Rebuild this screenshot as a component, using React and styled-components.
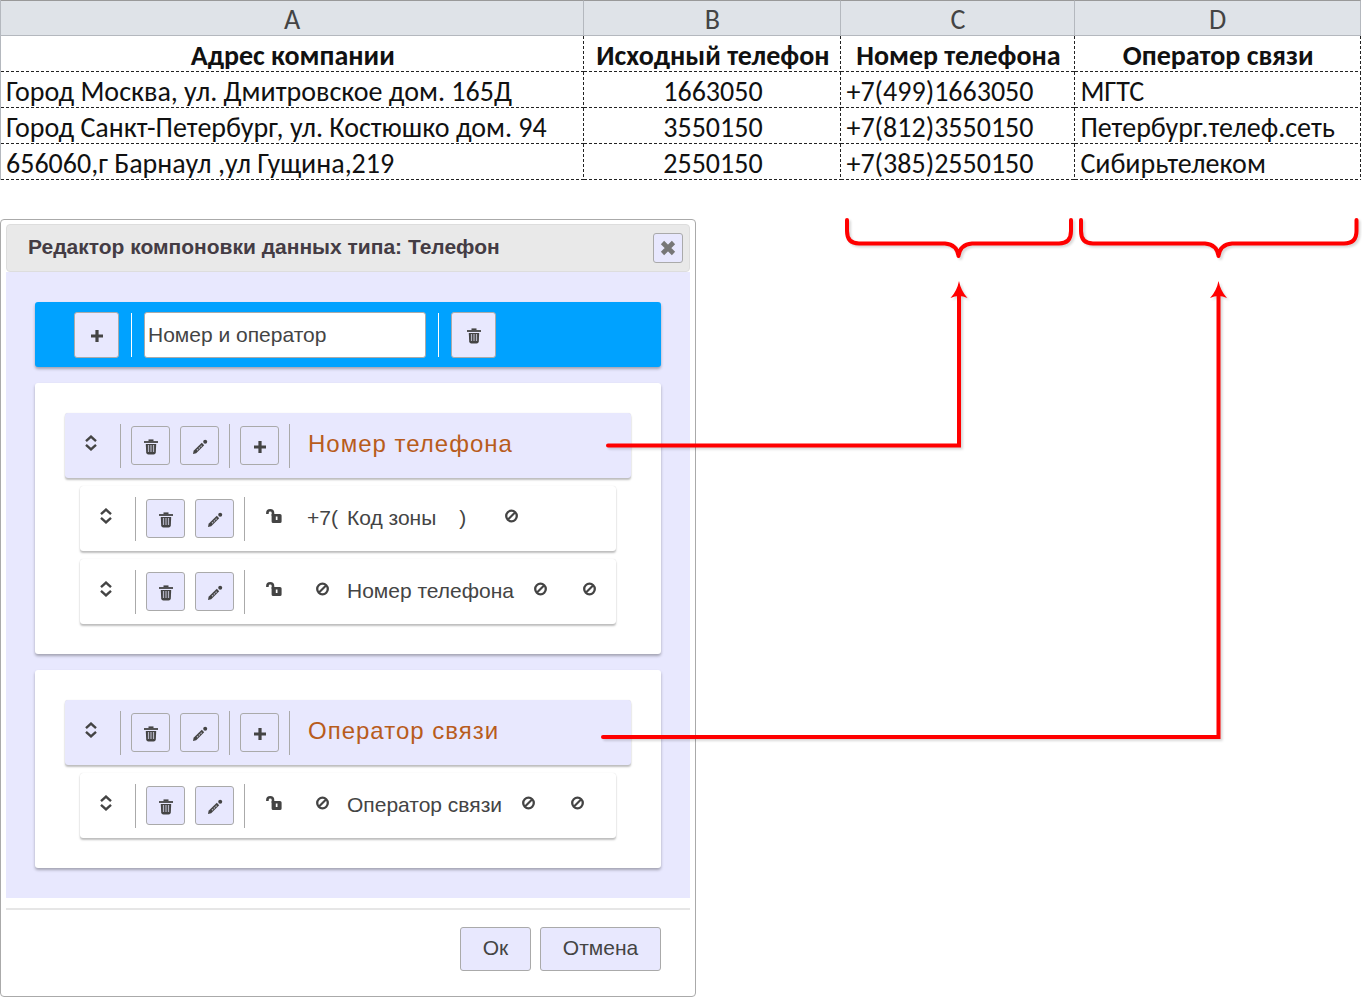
import React, { useState } from 'react';
import styled, { createGlobalStyle } from 'styled-components';

const GlobalStyle = createGlobalStyle`
  * {
    box-sizing: border-box;
  }

  body {
    margin: 0;
    background: #fff;
    color: #444;
    font-family: Arial, "Liberation Sans", sans-serif;
    font-size: 21px;
  }
`;

const Page = styled.main`
  position: relative;
`;

const SheetWrap = styled.div`
  padding-right: 1px;
`;

const Sheet = styled.table`
  width: 100%;
  table-layout: fixed;
  border-collapse: separate;
  border-spacing: 0;
  border-left: 1px solid #b4b8be;
  font-family: Calibri, Carlito, Lato, sans-serif;
  font-size: 28px;
  line-height: 32px;
  color: #111;
`;

const Col = styled.col`
  width: ${(props) => props.$width};
`;

const ColumnLetter = styled.th`
  height: 36px;
  padding: 4px 0 0;
  border-top: 1px solid #999;
  border-right: 1px solid #b4b8be;
  border-bottom: 1px solid #b4b8be;
  background: #dfe3e8;
  color: #444;
  font-weight: 400;
  line-height: 30px;
`;

const Cell = styled.td`
  height: 36px;
  padding: 4px 5px 0;
  text-align: ${(props) => props.$align || 'left'};
  font-weight: ${(props) => (props.$bold ? 700 : 400)};
  white-space: nowrap;
  background-image: repeating-linear-gradient(to right, #222 0 3px, transparent 3px 5px),
    repeating-linear-gradient(to bottom, #222 0 3px, transparent 3px 5px);
  background-size: 100% 1px, 1px 100%;
  background-position: left bottom, right top;
  background-repeat: no-repeat;
`;

const Dialog = styled.section`
  width: 100%;
  max-width: 696px;
  margin-top: 39px;
  padding: 4px 5px;
  border: 1px solid #aaa;
  border-radius: 4px;
`;

const DialogHeader = styled.header`
  display: flex;
  align-items: center;
  justify-content: space-between;
  height: 48px;
  padding: 0 6px 0 21px;
  border: 1px solid #ddd;
  border-radius: 4px;
  background: #e9e9e9;
`;

const DialogTitle = styled.h1`
  margin: 0;
  padding-bottom: 2px;
  font-size: 21px;
  line-height: 24px;
  color: #443c44;
`;

const Button = styled.button`
  display: inline-flex;
  flex: none;
  align-items: center;
  justify-content: center;
  width: ${(props) => props.$width || '39px'};
  height: ${(props) => props.$height || '39px'};
  padding: 2px 0 0;
  border: 1px solid #aaa;
  border-radius: 3px;
  background: #e8e8fe;
  color: #444;
  font: inherit;
  cursor: pointer;
`;

const CloseButton = styled(Button)`
  padding: 0;
  color: #777;
`;

const DialogBody = styled.div`
  display: flex;
  flex-direction: column;
  gap: 16px;
  padding: 30px 29px;
  background: #e8e8fe;
`;

const LayoutBar = styled.div`
  display: flex;
  align-items: center;
  gap: 12px;
  height: 65px;
  padding-left: 39px;
  border-radius: 3px;
  background: #00a2ff;
  box-shadow: 0 2px 3px rgba(0, 0, 0, 0.3);
`;

const Separator = styled.span`
  flex: none;
  width: 1px;
  height: 44px;
  background: ${(props) => props.$color || '#aaa'};
`;

const NameInput = styled.input`
  width: 282px;
  height: 46px;
  padding: 0 4px 0 3px;
  border: 1px solid #aaa;
  border-radius: 3px;
  background: #fff;
  color: #444;
  font: inherit;
`;

const Group = styled.section`
  display: flex;
  flex-direction: column;
  gap: 8px;
  padding: 30px;
  border-radius: 3px;
  background: #fff;
  box-shadow: 0 2px 3px rgba(0, 0, 0, 0.3);
`;

const Row = styled.div`
  display: flex;
  align-items: center;
  height: 65px;
  margin: ${(props) => (props.$head ? '0' : '0 15px')};
  border-radius: 3px;
  background: ${(props) => (props.$head ? '#e8e8fe' : '#fff')};
  box-shadow: 0 2px 2px rgba(0, 0, 0, 0.25), 0 0 1px rgba(0, 0, 0, 0.15);
`;

const Handle = styled.span`
  display: flex;
  justify-content: center;
  width: 52px;
  margin-right: 3px;
  padding-bottom: 6px;
  cursor: move;
`;

const Tools = styled.div`
  display: flex;
  gap: 10px;
  padding: 0 10px;
`;

const GroupTitle = styled.h2`
  margin: 0 0 0 18px;
  padding-bottom: 4px;
  color: #b85c1c;
  font-size: 24px;
  font-weight: 400;
  letter-spacing: 1px;
`;

const Slots = styled.div`
  display: flex;
  align-items: center;
  margin-left: 4px;
  padding-bottom: 2px;
`;

const Slot = styled.span`
  display: flex;
  justify-content: center;
  width: 49px;
  padding-bottom: ${(props) => (props.$icon ? '4px' : '0')};
`;

const FieldName = styled.span`
  padding-right: 2px;
  white-space: nowrap;
`;

const DialogFooter = styled.footer`
  display: flex;
  justify-content: flex-end;
  gap: 9px;
  margin-top: 10px;
  padding: 17px 29px 21px;
  border-top: 2px solid #e6e6e6;
`;

const FooterButton = styled(Button)`
  height: 44px;
  padding: 0 0 2px;
`;

const Markup = styled.svg`
  position: absolute;
  top: 0;
  left: 0;
  pointer-events: none;
  filter: drop-shadow(2px 2px 1px rgba(0, 0, 0, 0.15));
`;

const Icon = ({ children }) => (
  <svg width="16" height="16" viewBox="0 0 16 16" fill="none" stroke="currentColor" aria-hidden="true">
    {children}
  </svg>
);

const PlusIcon = () => (
  <Icon>
    <path d="M8 2v12M2 8h12" strokeWidth="3.2" />
  </Icon>
);

const TrashIcon = () => (
  <Icon>
    <path d="M1 3h14" strokeWidth="1.8" />
    <path d="M5.5 1.300h5" strokeWidth="1.800" />
    <path d="M2.800 5h10.400l-.4 8.600q-.2 2-2.200 2H5.400q-2 0-2.200-2z" fill="currentColor" stroke="none" />
    <path d="M5.500 6v7M8 6v7M10.500 6v7" stroke="#b4b4c4" strokeWidth="1.200" />
  </Icon>
);

const PencilIcon = () => (
  <Icon>
    <path d="M1 15l.6-3.200 8.200-8 2.400 2.400-8 8z" fill="currentColor" stroke="none" />
    <path d="M5 11.200l5.400-5.200" stroke="#b4b4c4" strokeWidth="1.200" strokeDasharray="1.500 1" />
    <circle cx="13.200" cy="2.800" r="2" fill="currentColor" stroke="none" />
  </Icon>
);

const SortIcon = () => (
  <Icon>
    <path d="M3 6.200l5-4.600 5 4.600M3 9.800l5 4.600 5-4.600" strokeWidth="2.400" />
  </Icon>
);

const UnlockIcon = () => (
  <Icon>
    <path d="M1.400 6V5Q1.400 2.300 4.200 2.300Q7 2.300 7 5v3" strokeWidth="2.600" />
    <path
      d="M5.600 6H14q1.600 0 1.600 1.600V13.400q0 1.600-1.600 1.600H7.200q-1.600 0-1.600-1.600z M9.800 8.500v3.500h1.700V8.500z"
      fill="currentColor"
      fillRule="evenodd"
      stroke="none"
    />
  </Icon>
);

const BanIcon = () => (
  <Icon>
    <circle cx="7.500" cy="8" r="5.300" strokeWidth="2.300" />
    <path d="M4 11.500l7-7" strokeWidth="2.200" />
  </Icon>
);

const CloseIcon = () => (
  <Icon>
    <path d="M2.500 2.500l11 11M13.500 2.500l-11 11" strokeWidth="4.600" />
  </Icon>
);

const letters = ['A', 'B', 'C', 'D'];
const headings = ['Адрес компании', 'Исходный телефон', 'Номер телефона', 'Оператор связи'];
const rows = [
  ['Город Москва, ул. Дмитровское дом. 165Д', '1663050', '+7(499)1663050', 'МГТС'],
  ['Город Санкт-Петербург, ул. Костюшко дом. 94', '3550150', '+7(812)3550150', 'Петербург.телеф.сеть'],
  ['656060,г Барнаул ,ул Гущина,219', '2550150', '+7(385)2550150', 'Сибирьтелеком'],
];

const groups = [
  {
    title: 'Номер телефона',
    fields: [
      { name: 'Код зоны', before: '+7(', after: [')', null] },
      { name: 'Номер телефона', before: null, after: [null, null] },
    ],
  },
  {
    title: 'Оператор связи',
    fields: [{ name: 'Оператор связи', before: null, after: [null, null] }],
  },
];

const EditButtons = () => (
  <Tools>
    <Button type="button" aria-label="Удалить">
      <TrashIcon />
    </Button>
    <Button type="button" aria-label="Изменить">
      <PencilIcon />
    </Button>
  </Tools>
);

const Affix = ({ value }) => <Slot $icon={!value}>{value || <BanIcon />}</Slot>;

const FieldRow = ({ field }) => (
  <Row>
    <Handle>
      <SortIcon />
    </Handle>
    <Separator />
    <EditButtons />
    <Separator />
    <Slots>
      <Slot $icon>
        <UnlockIcon />
      </Slot>
      <Affix value={field.before} />
      <FieldName>{field.name}</FieldName>
      {field.after.map((value, index) => (
        <Affix key={index} value={value} />
      ))}
    </Slots>
  </Row>
);

const FieldGroup = ({ group }) => (
  <Group>
    <Row $head>
      <Handle>
        <SortIcon />
      </Handle>
      <Separator />
      <EditButtons />
      <Separator />
      <Tools>
        <Button type="button" aria-label="Добавить поле">
          <PlusIcon />
        </Button>
      </Tools>
      <Separator />
      <GroupTitle>{group.title}</GroupTitle>
    </Row>
    {group.fields.map((field) => (
      <FieldRow key={field.name} field={field} />
    ))}
  </Group>
);

// Braces under columns C and D, each with an arrow from its group
const Connectors = () => (
  <Markup width="1362" height="760" viewBox="0 0 1362 760" fill="none" stroke="#f00" strokeWidth="4" aria-hidden="true">
    <g strokeLinecap="round" strokeLinejoin="round">
      <path d="M847 220V231Q847 243.500 859 243.500H945Q957 244.500 958.500 256Q960 244.500 972 243.500H1059Q1071 243.500 1071 231V220" />
      <path d="M1081 220V231Q1081 243.500 1093 243.500H1205Q1217 244.500 1218.500 256Q1220 244.500 1232 243.500H1344Q1356.500 243.500 1356.500 231V220" />
      <path d="M608 445.500H959V294" strokeLinejoin="miter" />
      <path d="M603 737H1218.500V294" strokeLinejoin="miter" />
    </g>
    <g fill="#f00" stroke="none">
      <path d="M959 281Q961 291 967.500 298Q959 294 950.500 298Q957 291 959 281z" />
      <path d="M1218.500 281Q1220.500 291 1227 298Q1218.500 294 1210 298Q1216.500 291 1218.500 281z" />
    </g>
  </Markup>
);

const App = () => {
  const [name, setName] = useState('Номер и оператор');

  return (
    <Page>
      <GlobalStyle />
      <SheetWrap>
        <Sheet>
          <colgroup>
            <Col $width="42.9%" />
            <Col $width="18.9%" />
            <Col $width="17.2%" />
            <Col $width="21%" />
          </colgroup>
          <thead>
            <tr>
              {letters.map((letter) => (
                <ColumnLetter key={letter} scope="col">
                  {letter}
                </ColumnLetter>
              ))}
            </tr>
          </thead>
          <tbody>
            <tr>
              {headings.map((heading) => (
                <Cell key={heading} $align="center" $bold>
                  {heading}
                </Cell>
              ))}
            </tr>
            {rows.map((row) => (
              <tr key={row[1]}>
                {row.map((value, index) => (
                  <Cell key={index} $align={index === 1 ? 'center' : 'left'}>
                    {value}
                  </Cell>
                ))}
              </tr>
            ))}
          </tbody>
        </Sheet>
      </SheetWrap>

      <Dialog role="dialog" aria-labelledby="dialog-title">
        <DialogHeader>
          <DialogTitle id="dialog-title">Редактор компоновки данных типа: Телефон</DialogTitle>
          <CloseButton type="button" $width="30px" $height="30px" aria-label="Закрыть">
            <CloseIcon />
          </CloseButton>
        </DialogHeader>
        <DialogBody>
          <LayoutBar>
            <Button type="button" $width="45px" $height="46px" aria-label="Добавить группу">
              <PlusIcon />
            </Button>
            <Separator $color="#fff" />
            <NameInput
              type="text"
              aria-label="Название компоновки"
              value={name}
              onChange={(e) => setName(e.target.value)}
            />
            <Separator $color="#fff" />
            <Button type="button" $width="45px" $height="46px" aria-label="Удалить компоновку">
              <TrashIcon />
            </Button>
          </LayoutBar>
          {groups.map((group) => (
            <FieldGroup key={group.title} group={group} />
          ))}
        </DialogBody>
        <DialogFooter>
          <FooterButton type="button" $width="71px">
            Ок
          </FooterButton>
          <FooterButton type="button" $width="121px">
            Отмена
          </FooterButton>
        </DialogFooter>
      </Dialog>
      <Connectors />
    </Page>
  );
};

export default App;
